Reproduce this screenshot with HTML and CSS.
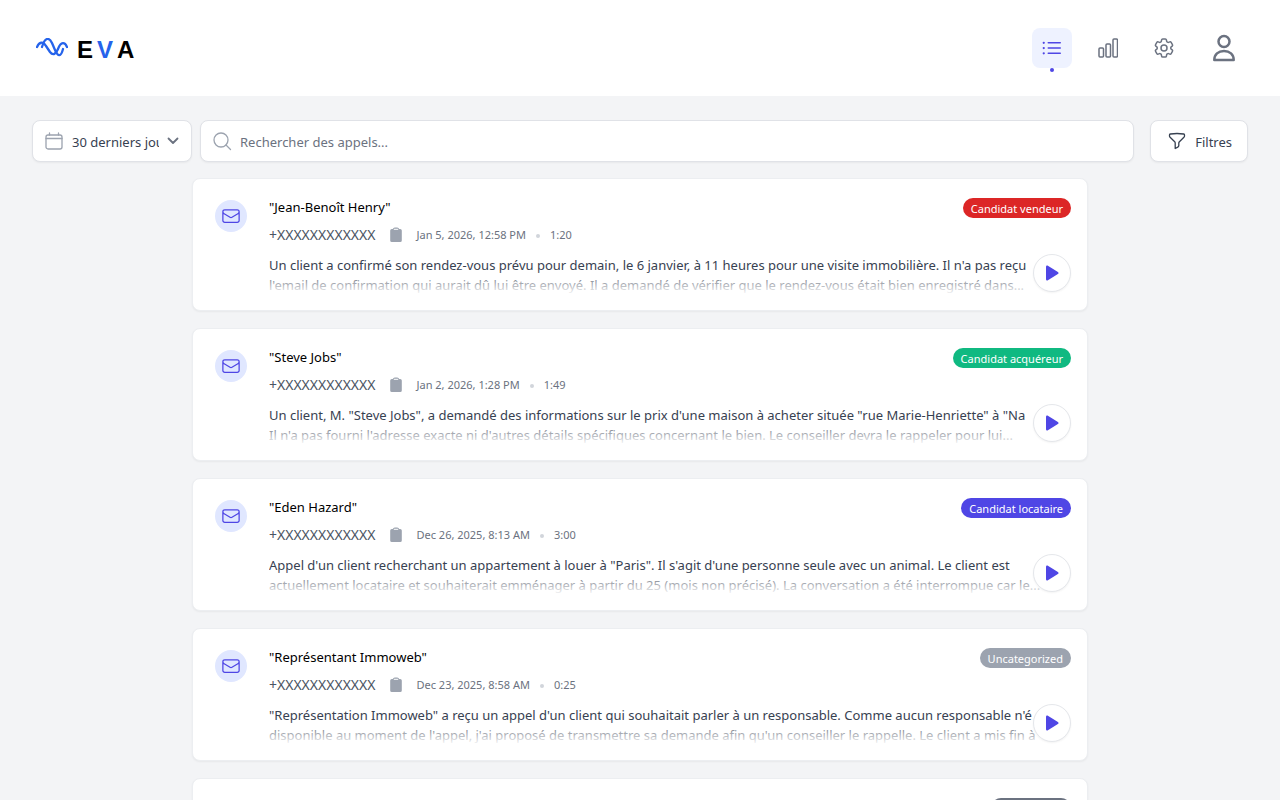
FILE: index.html
```html
<!DOCTYPE html>
<html lang="fr">
<head>
    <meta charset="UTF-8">
    <meta name="viewport" content="width=device-width, initial-scale=1.0">
    <title>EVA - Appels</title>
    <link rel="stylesheet" href="styles.css">
</head>

<body>
<!-- Shared icons -->
<svg class="sprite" aria-hidden="true">
    <symbol id="icon-mail" viewBox="0 0 24 24">
        <path d="M21.75 6.75v10.5a2.25 2.25 0 0 1-2.25 2.25h-15a2.25 2.25 0 0 1-2.25-2.25V6.75m19.5 0A2.25 2.25 0 0 0 19.5 4.5h-15a2.25 2.25 0 0 0-2.25 2.25m19.5 0v.243a2.25 2.25 0 0 1-1.07 1.916l-7.5 4.615a2.25 2.25 0 0 1-2.36 0L3.32 8.91a2.25 2.25 0 0 1-1.07-1.916V6.75"/>
    </symbol>
    <symbol id="icon-clipboard" viewBox="0 0 12 16">
        <path d="M1.800 2h1C3.300.8 4.500.4 6 .4s2.700.4 3.200 1.600h1A1.600 1.600 0 0 1 11.800 3.600v9.800a1.600 1.600 0 0 1-1.600 1.600H1.800A1.600 1.600 0 0 1 .2 13.400V3.600A1.600 1.600 0 0 1 1.800 2z"/>
        <path class="clip" d="M4.200 2.300h3.600"/>
    </symbol>
    <symbol id="icon-play" viewBox="0 0 14 16">
        <path d="M1 1.800C1 .8 2 .2 2.900.7l10 6.200c.8.500.8 1.700 0 2.200l-10 6.200C2 15.800 1 15.200 1 14.200z"/>
    </symbol>
</svg>

<header class="header">
    <a href="#" class="logo" aria-label="EVA">
        <svg class="logo-wave" viewBox="0 0 32 20">
            <path d="M1 9C3 4 7 3 10 8l4 6c3 4 6 2 8-3 3-8 7-7 9-2"/>
            <path d="M6 9C9-1 13-1 16 5l3 7c3 7 6 7 8-1"/>
        </svg>
        <span class="logo-text"><span>E</span><span class="accent">V</span><span>A</span></span>
    </a>
    <nav class="nav">
        <button class="nav-button active" aria-label="Appels">
            <svg viewBox="0 0 24 24">
                <path d="M8.25 6.75h12M8.25 12h12m-12 5.250h12M3.75 6.75h.007v.008H3.750V6.750Zm.375 0a.375.375 0 1 1-.75 0 .375.375 0 0 1 .75 0ZM3.750 12h.007v.008H3.750V12Zm.375 0a.375.375 0 1 1-.75 0 .375.375 0 0 1 .75 0Zm-.375 5.250h.007v.008H3.750v-.008Zm.375 0a.375.375 0 1 1-.75 0 .375.375 0 0 1 .75 0Z"/>
            </svg>
        </button>
        <button class="nav-button stats" aria-label="Statistiques">
            <svg viewBox="0 0 20 20">
                <rect x="1" y="10" width="4.500" height="9" rx="1"/>
                <rect x="8" y="6" width="4.500" height="13" rx="1"/>
                <rect x="15" y="1" width="4.500" height="18" rx="1"/>
            </svg>
        </button>
        <button class="nav-button" aria-label="Paramètres">
            <svg viewBox="0 0 24 24">
                <path d="M9.594 3.94c.09-.542.56-.94 1.11-.94h2.593c.55 0 1.02.398 1.11.94l.213 1.281c.063.374.313.686.645.87.074.04.147.083.22.127.325.196.72.257 1.075.124l1.217-.456a1.125 1.125 0 0 1 1.370.490l1.296 2.247a1.125 1.125 0 0 1-.26 1.431l-1.003.827c-.293.241-.438.613-.43.992a7.723 7.723 0 0 1 0 .255c-.008.378.137.750.430.991l1.004.827c.424.350.534.955.260 1.430l-1.298 2.247a1.125 1.125 0 0 1-1.369.491l-1.217-.456c-.355-.133-.750-.072-1.076.124a6.470 6.470 0 0 1-.220.128c-.331.183-.581.495-.644.869l-.213 1.281c-.090.543-.560.940-1.110.940h-2.594c-.550 0-1.019-.398-1.110-.940l-.213-1.281c-.062-.374-.312-.686-.644-.870a6.520 6.520 0 0 1-.220-.127c-.325-.196-.720-.257-1.076-.124l-1.217.456a1.125 1.125 0 0 1-1.369-.490l-1.297-2.247a1.125 1.125 0 0 1 .260-1.431l1.004-.827c.292-.240.437-.613.430-.991a6.932 6.932 0 0 1 0-.255c.007-.380-.138-.751-.430-.992l-1.004-.827a1.125 1.125 0 0 1-.260-1.430l1.297-2.247a1.125 1.125 0 0 1 1.370-.491l1.216.456c.356.133.751.072 1.076-.124.072-.044.146-.086.220-.128.332-.183.582-.495.644-.869l.214-1.280Z"/>
                <path d="M15 12a3 3 0 1 1-6 0 3 3 0 0 1 6 0Z"/>
            </svg>
        </button>
        <button class="nav-button user" aria-label="Mon compte">
            <svg viewBox="0 0 32 32">
                <circle cx="16" cy="9.500" r="5.500"/>
                <path d="M6.300 28c0-5.500 4-9 9.700-9s9.700 3.500 9.700 9z"/>
            </svg>
        </button>
    </nav>
</header>

<main class="main">
    <div class="toolbar">
        <div class="period">
            <svg class="field-icon" viewBox="0 0 20 20">
                <rect x="2" y="4" width="16" height="14" rx="2"/>
                <path d="M2 7.500h16M5.500 2v2M14.500 2v2"/>
            </svg>
            <select id="period" aria-label="Période">
                <option>30 derniers jours</option>
                <option>7 derniers jours</option>
            </select>
            <svg class="chevron" viewBox="0 0 12 12"><path d="M1.500 3.500 6 8l4.500-4.500"/></svg>
        </div>
        <div class="search">
            <svg class="field-icon" viewBox="0 0 20 20">
                <circle cx="9" cy="9" r="7"/>
                <path d="m14 14 4.500 4.500"/>
            </svg>
            <input type="text" id="search" aria-label="Rechercher" placeholder="Rechercher des appels...">
        </div>
        <button class="filters">
            <svg viewBox="0 0 20 20">
                <path d="M10 2.500c2.300 0 4.500.2 6.700.5.500.1.800.5.800 1v.9c0 .5-.2 1-.6 1.300l-4.500 4.500c-.4.400-.6.900-.6 1.300v2.500c0 .7-.4 1.300-1 1.600L8.200 17.500V12c0-.5-.2-1-.5-1.300L3.100 6.200c-.4-.4-.6-.8-.6-1.300V4c0-.5.300-.9.800-1 2.200-.3 4.400-.5 6.700-.5z"/>
            </svg>
            <span>Filtres</span>
        </button>
    </div>

    <div class="calls">
        <article class="call">
            <div class="call-icon"><svg><use href="#icon-mail"/></svg></div>
            <div class="call-body">
                <div class="call-head">
                    <h2>"Jean-Benoît Henry"</h2>
                    <span class="badge seller">Candidat vendeur</span>
                </div>
                <div class="meta">
                    <span class="phone">+XXXXXXXXXXXX</span>
                    <button class="copy" aria-label="Copier"><svg><use href="#icon-clipboard"/></svg></button>
                    <span>Jan 5, 2026, 12:58 PM</span>
                    <span class="dot"></span>
                    <span>1:20</span>
                </div>
                <p class="summary">
                    <span>Un client a confirmé son rendez-vous prévu pour demain, le 6 janvier, à 11 heures pour une visite immobilière. Il n'a pas reçu</span>
                    <span>l'email de confirmation qui aurait dû lui être envoyé. Il a demandé de vérifier que le rendez-vous était bien enregistré dans...</span>
                </p>
            </div>
            <button class="play" aria-label="Écouter"><svg><use href="#icon-play"/></svg></button>
        </article>

        <article class="call">
            <div class="call-icon"><svg><use href="#icon-mail"/></svg></div>
            <div class="call-body">
                <div class="call-head">
                    <h2>"Steve Jobs"</h2>
                    <span class="badge buyer">Candidat acquéreur</span>
                </div>
                <div class="meta">
                    <span class="phone">+XXXXXXXXXXXX</span>
                    <button class="copy" aria-label="Copier"><svg><use href="#icon-clipboard"/></svg></button>
                    <span>Jan 2, 2026, 1:28 PM</span>
                    <span class="dot"></span>
                    <span>1:49</span>
                </div>
                <p class="summary">
                    <span>Un client, M. "Steve Jobs", a demandé des informations sur le prix d'une maison à acheter située "rue Marie-Henriette" à "Na</span>
                    <span>Il n'a pas fourni l'adresse exacte ni d'autres détails spécifiques concernant le bien. Le conseiller devra le rappeler pour lui...</span>
                </p>
            </div>
            <button class="play" aria-label="Écouter"><svg><use href="#icon-play"/></svg></button>
        </article>

        <article class="call">
            <div class="call-icon"><svg><use href="#icon-mail"/></svg></div>
            <div class="call-body">
                <div class="call-head">
                    <h2>"Eden Hazard"</h2>
                    <span class="badge tenant">Candidat locataire</span>
                </div>
                <div class="meta">
                    <span class="phone">+XXXXXXXXXXXX</span>
                    <button class="copy" aria-label="Copier"><svg><use href="#icon-clipboard"/></svg></button>
                    <span>Dec 26, 2025, 8:13 AM</span>
                    <span class="dot"></span>
                    <span>3:00</span>
                </div>
                <p class="summary">
                    <span>Appel d'un client recherchant un appartement à louer à "Paris". Il s'agit d'une personne seule avec un animal. Le client est</span>
                    <span>actuellement locataire et souhaiterait emménager à partir du 25 (mois non précisé). La conversation a été interrompue car le...</span>
                </p>
            </div>
            <button class="play" aria-label="Écouter"><svg><use href="#icon-play"/></svg></button>
        </article>

        <article class="call">
            <div class="call-icon"><svg><use href="#icon-mail"/></svg></div>
            <div class="call-body">
                <div class="call-head">
                    <h2>"Représentant Immoweb"</h2>
                    <span class="badge none">Uncategorized</span>
                </div>
                <div class="meta">
                    <span class="phone">+XXXXXXXXXXXX</span>
                    <button class="copy" aria-label="Copier"><svg><use href="#icon-clipboard"/></svg></button>
                    <span>Dec 23, 2025, 8:58 AM</span>
                    <span class="dot"></span>
                    <span>0:25</span>
                </div>
                <p class="summary">
                    <span>"Représentation Immoweb" a reçu un appel d'un client qui souhaitait parler à un responsable. Comme aucun responsable n'é</span>
                    <span>disponible au moment de l'appel, j'ai proposé de transmettre sa demande afin qu'un conseiller le rappelle. Le client a mis fin à</span>
                </p>
            </div>
            <button class="play" aria-label="Écouter"><svg><use href="#icon-play"/></svg></button>
        </article>

        <article class="call">
            <div class="call-icon"><svg><use href="#icon-mail"/></svg></div>
            <div class="call-body">
                <div class="call-head">
                    <span class="badge other"></span>
                </div>
            </div>
        </article>
    </div>
</main>
</body>
</html>
```
FILE: styles.css
```css
* {
    box-sizing: border-box;
}

body {
    font-family: 'Segoe UI', 'Noto Sans', 'Open Sans', sans-serif;
    font-size: 13px;
    line-height: 20px;
    background-color: #f3f4f6;
    margin: 0;
    color: #374151;
    height: 100vh;
    overflow: hidden;
}

button {
    font: inherit;
    border: none;
    padding: 0;
    background: none;
    cursor: pointer;
}

svg {
    display: block;
    fill: none;
    stroke: currentColor;
    stroke-width: 1.5;
    stroke-linecap: round;
    stroke-linejoin: round;
}

.sprite {
    display: none;
}

/* Header */
.header {
    display: flex;
    align-items: center;
    justify-content: space-between;
    height: 96px;
    padding: 0 32px 0 36px;
    background-color: #fff;
}

.logo {
    display: flex;
    align-items: center;
    gap: 9px;
    color: #000;
    text-decoration: none;
}

.logo-wave {
    width: 32px;
    height: 20px;
    color: #2563eb;
    stroke-width: 2.3;
}

.logo-text {
    display: flex;
    gap: 4px;
    font-family: 'Liberation Sans', Arial, sans-serif;
    font-size: 24px;
    line-height: 28px;
    font-weight: bold;
    padding-top: 3px;
}

.accent {
    color: #2563eb;
}

.nav {
    display: flex;
    align-items: center;
    gap: 16px;
}

.nav-button {
    position: relative;
    display: flex;
    align-items: center;
    justify-content: center;
    width: 40px;
    height: 40px;
    border-radius: 8px;
    color: #6b7280;
}

.nav-button svg {
    width: 24px;
    height: 24px;
}

.nav-button.stats svg {
    width: 20px;
    height: 20px;
}

.nav-button.active {
    background-color: #eef2ff;
    color: #4f46e5;
}

.nav-button.active::after {
    content: "";
    position: absolute;
    bottom: -4px;
    left: 18px;
    width: 4px;
    height: 4px;
    border-radius: 50%;
    background-color: #4f46e5;
}

.nav-button.user {
    width: 48px;
    height: 48px;
}

.nav-button.user svg {
    width: 32px;
    height: 32px;
    stroke-width: 2.5;
}

/* Toolbar */
.main {
    padding: 24px 32px;
}

.toolbar {
    display: flex;
    gap: 8px;
    margin-bottom: 16px;
}

.period,
.search,
.filters {
    display: flex;
    align-items: center;
    height: 42px;
    border: 1px solid #e0e2e7;
    border-radius: 8px;
    background-color: #fff;
    box-shadow: 0 1px 2px rgba(0, 0, 0, 0.05);
}

.period {
    width: 160px;
    padding: 0 12px 0 11px;
}

.search {
    flex: 1;
    padding: 0 12px 0 11px;
}

.field-icon {
    flex: none;
    width: 20px;
    height: 20px;
    margin-right: 8px;
    color: #9ca3af;
    stroke-width: 1.3;
}

select,
input {
    flex: 1;
    min-width: 0;
    font: inherit;
    color: #374151;
    border: none;
    padding: 2px 0 0;
    background: none;
    outline: none;
}

select {
    appearance: none;
    text-overflow: clip;
    height: 26px;
    margin-right: 8px;
}

input::placeholder {
    color: #6b7280;
}

.chevron {
    width: 12px;
    height: 12px;
    color: #6b7280;
    stroke-width: 1.8;
}

.filters {
    gap: 8px;
    padding: 0 15px 0 16px;
    margin-left: 8px;
    color: #374151;
}

.filters span {
    padding-top: 2px;
}

.filters svg {
    width: 20px;
    height: 20px;
    stroke-width: 1.3;
}

/* Call list */
.calls {
    display: flex;
    flex-direction: column;
    gap: 17px;
    max-width: 896px;
    margin: 0 auto;
}

.call {
    position: relative;
    display: flex;
    gap: 22px;
    padding: 18px 16px 15px 22px;
    border: 1px solid #eceef1;
    border-radius: 8px;
    background-color: #fff;
    box-shadow: 0 1px 2px rgba(0, 0, 0, 0.05);
}

.call-icon {
    flex: none;
    display: flex;
    align-items: center;
    justify-content: center;
    width: 32px;
    height: 32px;
    margin-top: 3px;
    border-radius: 50%;
    background-color: #e0e7ff;
    color: #4f46e5;
}

.call-icon svg {
    width: 20px;
    height: 20px;
}

.call-body {
    flex: 1;
    min-width: 0;
}

.call-head {
    display: flex;
    justify-content: space-between;
    height: 20px;
}

h2 {
    margin: 0;
    font-size: 13px;
    font-weight: normal;
    color: #000;
}

.badge {
    height: 20px;
    margin-top: 1px;
    margin-left: auto;
    padding: 0 8px;
    border-radius: 10px;
    font-size: 11px;
    line-height: 21px;
    color: #fff;
}

.seller {
    background-color: #dc2626;
}

.buyer {
    background-color: #10b981;
}

.tenant {
    background-color: #4f46e5;
}

.none {
    background-color: #9ca3af;
}

.other {
    width: 80px;
    background-color: #6b7280;
}

.meta {
    display: flex;
    align-items: center;
    height: 20px;
    margin-top: 8px;
    font-size: 11px;
    color: #6b7280;
}

.phone {
    font-size: 14px;
    color: #4b5563;
}

.copy {
    margin: 0 14px 0 15px;
    color: #9ca3af;
}

.copy svg {
    width: 12px;
    height: 16px;
    fill: currentColor;
    stroke: none;
}

.clip {
    stroke: #fff;
    stroke-width: 1;
}

.dot {
    width: 4px;
    height: 4px;
    margin: 2px 10px 0;
    border-radius: 50%;
    background-color: #d1d5db;
}

.summary {
    position: relative;
    height: 40px;
    margin: 10px 24px 0 0;
    overflow: hidden;
}

.summary span {
    display: block;
    white-space: nowrap;
}

/* Fade out of the second line */
.summary::after {
    content: "";
    position: absolute;
    left: 0;
    right: 0;
    bottom: 0;
    height: 26px;
    background: linear-gradient(to top, #fff, rgba(255, 255, 255, 0));
}

.play {
    position: absolute;
    right: 16px;
    bottom: 18px;
    display: flex;
    align-items: center;
    justify-content: center;
    width: 38px;
    height: 38px;
    border: 1px solid #e5e7eb;
    border-radius: 50%;
    background-color: #fff;
    color: #4f46e5;
    box-shadow: 0 1px 2px rgba(0, 0, 0, 0.05);
}

.play svg {
    width: 14px;
    height: 16px;
    fill: currentColor;
    stroke: none;
}
```
